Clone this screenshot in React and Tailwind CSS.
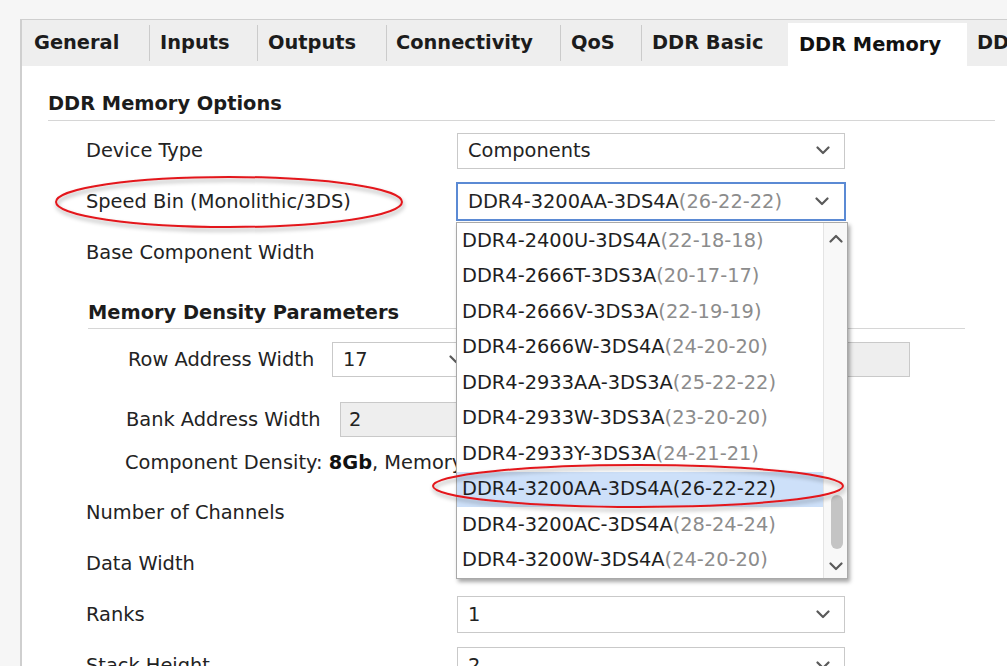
import React from 'react';

const tabs = [
  { label: 'General', w: 'w-[127px]', pl: 'pl-[12px]' },
  { label: 'Inputs', w: 'w-[107px]', pl: 'pl-[10px]' },
  { label: 'Outputs', w: 'w-[128px]', pl: 'pl-[10px]' },
  { label: 'Connectivity', w: 'w-[173px]', pl: 'pl-[9px]' },
  { label: 'QoS', w: 'w-[80px]', pl: 'pl-[10px]' },
  { label: 'DDR Basic', w: 'w-[146px]', pl: 'pl-[10px]', noSep: true },
  { label: 'DDR Memory', w: 'w-[179px]', pl: 'pl-[11px]', active: true, noSep: true },
  { label: 'DDR Advanced', w: 'w-[200px]', pl: 'pl-[10px]' },
];

const bins = [
  ['DDR4-2400U-3DS4A', '(22-18-18)'],
  ['DDR4-2666T-3DS3A', '(20-17-17)'],
  ['DDR4-2666V-3DS3A', '(22-19-19)'],
  ['DDR4-2666W-3DS4A', '(24-20-20)'],
  ['DDR4-2933AA-3DS3A', '(25-22-22)'],
  ['DDR4-2933W-3DS3A', '(23-20-20)'],
  ['DDR4-2933Y-3DS3A', '(24-21-21)'],
  ['DDR4-3200AA-3DS4A', '(26-22-22)', true],
  ['DDR4-3200AC-3DS4A', '(28-24-24)'],
  ['DDR4-3200W-3DS4A', '(24-20-20)'],
];

const Chevron = ({ up = false, className = '' }) => (
  <svg width="14" height="9" viewBox="0 0 14 9" className={className}>
    <polyline
      points={up ? '1.5,7.5 7,2 12.5,7.5' : '1.5,1.5 7,7 12.5,1.5'}
      fill="none"
      stroke="#5a5a5a"
      strokeWidth="2.2"
      strokeLinecap="round"
      strokeLinejoin="round"
    />
  </svg>
);

const Select = ({ value, className = 'w-[388px] h-[36px] border border-[#c9c9c9]' }) => (
  <div className={`flex items-center justify-between bg-white pl-[10px] pr-[14px] ${className}`}>
    <span>{value}</span>
    <Chevron />
  </div>
);

const Row = ({ label, children }) => (
  <div className="flex h-[51px] items-center pl-[38px]">
    <div className="w-[371px] shrink-0">{label}</div>
    {children}
  </div>
);

export default function App() {
  return (
    <div className="relative h-[666px] w-[1007px] overflow-hidden bg-[#f6f6f6] font-['DejaVu_Sans',sans-serif] text-[19.4px] leading-[24px] text-[#232323]">
      <div className="ml-[20px] mt-[19px] h-[720px] w-[1120px] border-l-2 border-t border-[#cfcfcf] bg-white">
        {/* tab strip */}
        <div className="flex h-[46px] items-stretch bg-[#eeeeee] font-bold text-[#1c1c1c]">
          {tabs.map((t) => (
            <React.Fragment key={t.label}>
              <div
                className={`flex shrink-0 items-center ${t.w} ${t.pl} ${
                  t.active ? 'mt-[3px] bg-white text-[#111]' : ''
                }`}
              >
                {t.label}
              </div>
              {!t.noSep && <div className="h-[36px] w-px shrink-0 self-center bg-[#cbcbcb]" />}
            </React.Fragment>
          ))}
        </div>

        {/* content */}
        <div className="pl-[26px]">
          <div className="mt-[26px] h-[29px] w-[947px] border-b border-[#d6d6d6] font-bold text-[#1c1c1c]">
            DDR Memory Options
          </div>

          <div className="mt-[4px]">
            <Row label="Device Type">
              <Select value="Components" />
            </Row>
            <div className="flex h-[51px] items-center pl-[38px]">
              <div className="w-[370px] shrink-0">Speed Bin (Monolithic/3DS)</div>
              <div className="flex h-[39px] w-[390px] items-center justify-between border-2 border-[#5b8ad4] bg-white pl-[10px] pr-[15px]">
                <span>
                  DDR4-3200AA-3DS4A<span className="text-[#8c8c8c]">(26-22-22)</span>
                </span>
                <Chevron />
              </div>
            </div>
            <Row label="Base Component Width">
              <Select value="x4" />
            </Row>
          </div>

          {/* memory density */}
          <div className="ml-[40px] mt-[23px] h-[28px] w-[877px] border-b border-[#d6d6d6] font-bold text-[#1c1c1c]">
            Memory Density Parameters
          </div>
          <div className="ml-[80px] mt-[13px] flex h-[35px] items-center">
            <div className="w-[204px] shrink-0">Row Address Width</div>
            <Select value="17" className="h-[35px] w-[140px] border border-[#c9c9c9] !pr-[8px]" />
            <div className="ml-[228px] h-[35px] w-[210px] border border-[#c9c9c9] bg-[#eeeeee]" />
          </div>
          <div className="ml-[78px] mt-[25px] flex h-[35px] items-center">
            <div className="w-[214px] shrink-0">Bank Address Width</div>
            <div className="flex h-[35px] w-[200px] items-center border border-[#c9c9c9] bg-[#eeeeee] pl-[8px]">2</div>
          </div>
          <div className="ml-[77px] mt-[14px]">
            Component Density: <b className="text-[#111]">8Gb</b>, Memory Density: 16Gb
          </div>

          <div className="mt-[12px]">
            <Row label="Number of Channels" />
            <Row label="Data Width" />
            <Row label="Ranks">
              <Select value="1" className="h-[37px] w-[388px] border border-[#c9c9c9]" />
            </Row>
            <Row label="Stack Height">
              <Select value="2" className="h-[37px] w-[388px] border border-[#c9c9c9]" />
            </Row>
          </div>
        </div>
      </div>

      {/* open speed bin list */}
      <div className="absolute left-[456px] top-[222px] flex h-[357px] w-[392px] border border-[#a9a9a9] bg-white shadow-[2px_3px_4px_rgba(0,0,0,0.35)]">
        <div className="w-[366px] shrink-0">
          {bins.map(([name, timing, sel]) => (
            <div
              key={name}
              className={`flex h-[35.5px] items-center pl-[5px] text-[#1e1e1e] ${sel ? 'bg-[#cde0f9]' : ''}`}
            >
              {name}
              <span className={sel ? 'text-[#1e1e1e]' : 'text-[#8c8c8c]'}>{timing}</span>
            </div>
          ))}
        </div>
        <div className="flex flex-1 flex-col items-center border-l border-[#e4e4e4] bg-[#f8f8f8]">
          <div className="flex h-[30px] items-center">
            <Chevron up />
          </div>
          <div className="ml-[2px] mt-[242px] h-[54px] w-[12px] rounded-[6px] bg-[#c4c4c4]" />
          <div className="flex-1" />
          <div className="flex h-[24px] items-center">
            <Chevron />
          </div>
        </div>
      </div>

      {/* red annotation rings */}
      <svg className="pointer-events-none absolute left-0 top-0" width="1007" height="666">
        <defs>
          <filter id="ring" x="-10%" y="-40%" width="120%" height="180%">
            <feDropShadow dx="1" dy="3" stdDeviation="2" floodColor="#000" floodOpacity="0.35" />
          </filter>
        </defs>
        <ellipse cx="229" cy="202" rx="173" ry="25" fill="none" stroke="#e3171b" strokeWidth="2" filter="url(#ring)" />
        <ellipse cx="638" cy="486" rx="205" ry="21" fill="none" stroke="#e3171b" strokeWidth="2" filter="url(#ring)" />
      </svg>
    </div>
  );
}
